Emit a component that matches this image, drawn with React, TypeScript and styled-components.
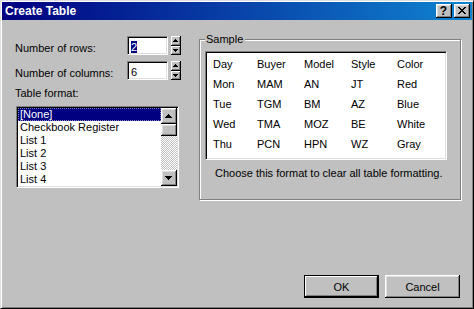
import React from "react";
import styled, { createGlobalStyle } from "styled-components";

const GlobalStyle = createGlobalStyle`
  html, body { margin: 0; padding: 0; background: #c0c0c0; }
  body { font-family: "Liberation Sans", Arial, sans-serif; font-size: 11px; }
  * { box-sizing: border-box; }
`;

const Window = styled.div`
  width: 474px;
  height: 309px;
  background: #c0c0c0;
  border: 1px solid;
  border-color: #dfdfdf #000 #000 #dfdfdf;
  box-shadow: inset 1px 1px 0 #fff, inset -1px -1px 0 #808080;
  padding: 1px;
  display: flex;
  flex-direction: column;
  font-family: "Liberation Sans", Arial, sans-serif;
  font-size: 11px;
  color: #000;
`;

const TitleBar = styled.div`
  height: 18px;
  flex: none;
  display: flex;
  align-items: center;
  justify-content: space-between;
  padding: 0 2px 0 3px;
  background: linear-gradient(to right, #000080, #1084d0);
`;

const TitleText = styled.span`
  color: #fff;
  font-weight: bold;
  font-size: 12px;
  line-height: 18px;
  white-space: nowrap;
`;

const TitleButtons = styled.div`
  display: flex;
  gap: 2px;
`;

const bevel = `
  background: #c0c0c0;
  box-shadow: inset -1px -1px 0 #000, inset 1px 1px 0 #fff,
    inset -2px -2px 0 #808080, inset 2px 2px 0 #dfdfdf;
`;

const TitleButton = styled.div`
  width: 16px;
  height: 14px;
  ${bevel}
  display: flex;
  align-items: center;
  justify-content: center;
  font-weight: bold;
  font-size: 12px;
  line-height: 12px;
  padding: 0 1px 1px 0;
`;

const Main = styled.div`
  display: flex;
  gap: 18px;
  padding: 13px 0 0 13px;
`;

const LeftColumn = styled.div`
  width: 166px;
  margin-top: 3px;
  display: flex;
  flex-direction: column;
`;

const FieldRow = styled.div`
  display: flex;
  height: 19px;
  & + & {
    margin-top: 6px;
  }
`;

const FieldLabel = styled.div`
  width: 112px;
  padding-top: 6px;
  line-height: 13px;
  white-space: nowrap;
`;

const sunken = `
  border: 1px solid;
  border-color: #808080 #fff #fff #808080;
  box-shadow: inset 1px 1px 0 #000, inset -1px -1px 0 #dfdfdf;
`;

const EditBox = styled.div`
  width: 41px;
  height: 19px;
  background: #fff;
  ${sunken}
  padding: 4px 0 0 3px;
  line-height: 12px;
`;

const EditText = styled.span<{ $selected?: boolean }>`
  display: inline-block;
  height: 12px;
  line-height: 12px;
  background: ${(p) => (p.$selected ? "#000080" : "transparent")};
  color: ${(p) => (p.$selected ? "#fff" : "#000")};
`;

const Spinner = styled.div`
  margin-left: 3px;
  width: 10px;
  display: grid;
  grid-template-rows: 10px 9px;
`;

const SpinButton = styled.div`
  background: #c0c0c0;
  box-shadow: inset -1px -1px 0 #000, inset 1px 1px 0 #fff,
    inset -2px -2px 0 #808080;
  display: flex;
  align-items: center;
  justify-content: center;
  padding: 0 1px 1px 0;
`;

const SectionLabel = styled.div`
  margin-top: 7px;
  line-height: 13px;
`;

const ListBox = styled.div`
  margin: 6px 0 0 1px;
  width: 163px;
  height: 82px;
  background: #fff;
  ${sunken}
  padding: 1px;
  display: flex;
`;

const ListItems = styled.div`
  flex: 1;
  display: flex;
  flex-direction: column;
  overflow: hidden;
`;

const ListItem = styled.div<{ $selected?: boolean }>`
  height: 13px;
  flex: none;
  line-height: 13px;
  padding-left: 2px;
  white-space: nowrap;
  background: ${(p) => (p.$selected ? "#000080" : "transparent")};
  color: ${(p) => (p.$selected ? "#fff" : "#000")};
  outline: ${(p) => (p.$selected ? "1px dotted #8080c0" : "none")};
  outline-offset: -1px;
`;

const ScrollBar = styled.div`
  width: 16px;
  flex: none;
  display: flex;
  flex-direction: column;
`;

const ScrollButton = styled.div`
  width: 16px;
  height: 16px;
  flex: none;
  ${bevel}
  display: flex;
  align-items: center;
  justify-content: center;
  padding: 0 1px 1px 0;
`;

const ScrollThumb = styled.div`
  height: 12px;
  flex: none;
  ${bevel}
`;

const ScrollTrack = styled.div`
  flex: 1;
  background-image: conic-gradient(#fff 25%, #c0c0c0 0 50%, #fff 0 75%, #c0c0c0 0);
  background-size: 2px 2px;
`;

const GroupBox = styled.div`
  width: 262px;
  height: 161px;
  margin-top: 6px;
  border: 1px solid #808080;
  box-shadow: 1px 1px 0 #fff, inset 1px 1px 0 #fff;
  padding: 0 0 0 5px;
  display: flex;
  flex-direction: column;
`;

const GroupCaption = styled.div`
  align-self: flex-start;
  margin-top: -7px;
  padding: 0 2px 0 1px;
  line-height: 13px;
  background: #c0c0c0;
`;

const SampleBox = styled.div`
  margin-top: 5px;
  width: 242px;
  height: 109px;
  background: #fff;
  ${sunken}
  padding: 2px 0 0 7px;
`;

const SampleGrid = styled.div`
  display: grid;
  grid-template-columns: 44px 47px 47px 46px 1fr;
  grid-auto-rows: 20px;
  line-height: 20px;
  white-space: nowrap;
`;

const Note = styled.div`
  margin-top: 7px;
  padding-left: 10px;
  line-height: 13px;
  white-space: nowrap;
`;

const Footer = styled.div`
  margin-top: auto;
  display: flex;
  justify-content: flex-end;
  gap: 6px;
  padding: 0 12px 9px 0;
`;

const PushButton = styled.div<{ $default?: boolean }>`
  width: 75px;
  height: 23px;
  display: flex;
  align-items: center;
  justify-content: center;
  background: #c0c0c0;
  ${(p) =>
    p.$default
      ? `border: 1px solid #000;
         box-shadow: inset -1px -1px 0 #000, inset 1px 1px 0 #fff, inset -2px -2px 0 #808080;`
      : `box-shadow: inset -1px -1px 0 #000, inset 1px 1px 0 #fff,
           inset -2px -2px 0 #808080, inset 2px 2px 0 #dfdfdf;`}
`;

function PixelIcon({ rows }: { rows: string[] }) {
  const w = rows[0].length;
  const h = rows.length;
  const rects: React.ReactNode[] = [];
  rows.forEach((r, y) =>
    r.split("").forEach((c, x) => {
      if (c === "#") rects.push(<rect key={`${x}-${y}`} x={x} y={y} width={1} height={1} />);
    })
  );
  return (
    <svg width={w} height={h} viewBox={`0 0 ${w} ${h}`} shapeRendering="crispEdges" fill="#000">
      {rects}
    </svg>
  );
}

const CLOSE = ["##....##", ".##..##.", "..####..", "...##...", "..####..", ".##..##.", "##....##"];
const SPIN_UP = ["..#..", ".###.", "#####"];
const SPIN_DOWN = ["#####", ".###.", "..#.."];
const SCROLL_UP = ["...#...", "..###..", ".#####.", "#######"];
const SCROLL_DOWN = ["#######", ".#####.", "..###..", "...#..."];

const sample = [
  ["Day", "Buyer", "Model", "Style", "Color"],
  ["Mon", "MAM", "AN", "JT", "Red"],
  ["Tue", "TGM", "BM", "AZ", "Blue"],
  ["Wed", "TMA", "MOZ", "BE", "White"],
  ["Thu", "PCN", "HPN", "WZ", "Gray"],
];

const formats = ["[None]", "Checkbook Register", "List 1", "List 2", "List 3", "List 4"];

export default function App() {
  return (
    <>
      <GlobalStyle />
      <Window>
        <TitleBar>
          <TitleText>Create Table</TitleText>
          <TitleButtons>
            <TitleButton>?</TitleButton>
            <TitleButton>
              <PixelIcon rows={CLOSE} />
            </TitleButton>
          </TitleButtons>
        </TitleBar>
        <Main>
          <LeftColumn>
            <FieldRow>
              <FieldLabel>Number of rows:</FieldLabel>
              <EditBox>
                <EditText $selected>2</EditText>
              </EditBox>
              <Spinner>
                <SpinButton>
                  <PixelIcon rows={SPIN_UP} />
                </SpinButton>
                <SpinButton>
                  <PixelIcon rows={SPIN_DOWN} />
                </SpinButton>
              </Spinner>
            </FieldRow>
            <FieldRow>
              <FieldLabel>Number of columns:</FieldLabel>
              <EditBox>
                <EditText>6</EditText>
              </EditBox>
              <Spinner>
                <SpinButton>
                  <PixelIcon rows={SPIN_UP} />
                </SpinButton>
                <SpinButton>
                  <PixelIcon rows={SPIN_DOWN} />
                </SpinButton>
              </Spinner>
            </FieldRow>
            <SectionLabel>Table format:</SectionLabel>
            <ListBox>
              <ListItems>
                {formats.map((f, i) => (
                  <ListItem key={f} $selected={i === 0}>
                    {f}
                  </ListItem>
                ))}
              </ListItems>
              <ScrollBar>
                <ScrollButton>
                  <PixelIcon rows={SCROLL_UP} />
                </ScrollButton>
                <ScrollThumb />
                <ScrollTrack />
                <ScrollButton>
                  <PixelIcon rows={SCROLL_DOWN} />
                </ScrollButton>
              </ScrollBar>
            </ListBox>
          </LeftColumn>
          <GroupBox>
            <GroupCaption>Sample</GroupCaption>
            <SampleBox>
              <SampleGrid>
                {sample.flat().map((c, i) => (
                  <span key={i}>{c}</span>
                ))}
              </SampleGrid>
            </SampleBox>
            <Note>Choose this format to clear all table formatting.</Note>
          </GroupBox>
        </Main>
        <Footer>
          <PushButton $default>OK</PushButton>
          <PushButton>Cancel</PushButton>
        </Footer>
      </Window>
    </>
  );
}
